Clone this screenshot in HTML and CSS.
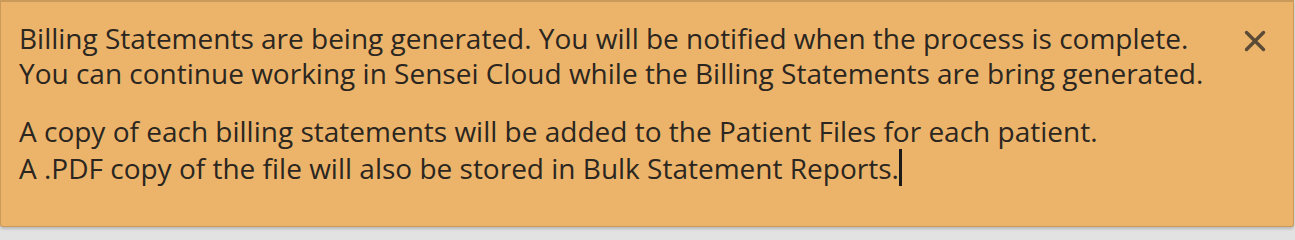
FILE: index.html
```html
<!DOCTYPE html>
<html lang="en">
<head>
<meta charset="utf-8">
<title>Billing Statements</title>
<link rel="stylesheet" href="styles.css">
</head>
<body>
<div class="alert">
  <div class="alert-body">
    <p class="para">Billing Statements are being generated. You will be notified when the process is complete.<br>You can continue working in Sensei Cloud while the Billing Statements are bring generated.</p>
    <p class="para">A copy of each billing statements will be added to the Patient Files for each patient.<br>A .PDF copy of the file will also be stored in Bulk Statement Reports.<span class="caret"></span></p>
  </div>
  <button class="close" aria-label="Close">
    <svg width="22" height="22" viewBox="0 0 22 22"><path d="M2.5 2.5 L19.5 19.5 M19.5 2.5 L2.5 19.5" stroke="#5b4a36" stroke-width="3.4" stroke-linecap="round"/></svg>
  </button>
</div>
</body>
</html>
```
FILE: styles.css
```css
html, body {
  margin: 0;
  padding: 0;
  background: #e2e2e2;
}
body {
  width: 1295px;
  height: 231px;
  overflow: hidden;
}
.alert {
  box-sizing: border-box;
  width: 1294px;
  height: 227px;
  background: #ecb46b;
  border: 1px solid #c99a5a;
  border-top-width: 2px;
  border-radius: 0 0 3px 3px;
  box-shadow: 0 2px 3px rgba(0,0,0,0.18);
  display: flex;
  align-items: flex-start;
  padding: 19px 27px 0 18px;
  font-family: "Open Sans", "Noto Sans", sans-serif;
  font-size: 28px;
  line-height: 35px;
  color: #2b2620;
}
.alert-body {
  flex: 1;
  white-space: nowrap;
}
.para {
  margin: 0 0 23px 0;
}
.caret {
  display: inline-block;
  width: 3px;
  height: 37px;
  background: #1a1a1a;
  vertical-align: -7px;
}
.close {
  border: 0;
  background: none;
  padding: 0;
  margin-top: 9px;
  width: 22px;
  height: 22px;
  cursor: pointer;
}
.close svg {
  display: block;
}
```
